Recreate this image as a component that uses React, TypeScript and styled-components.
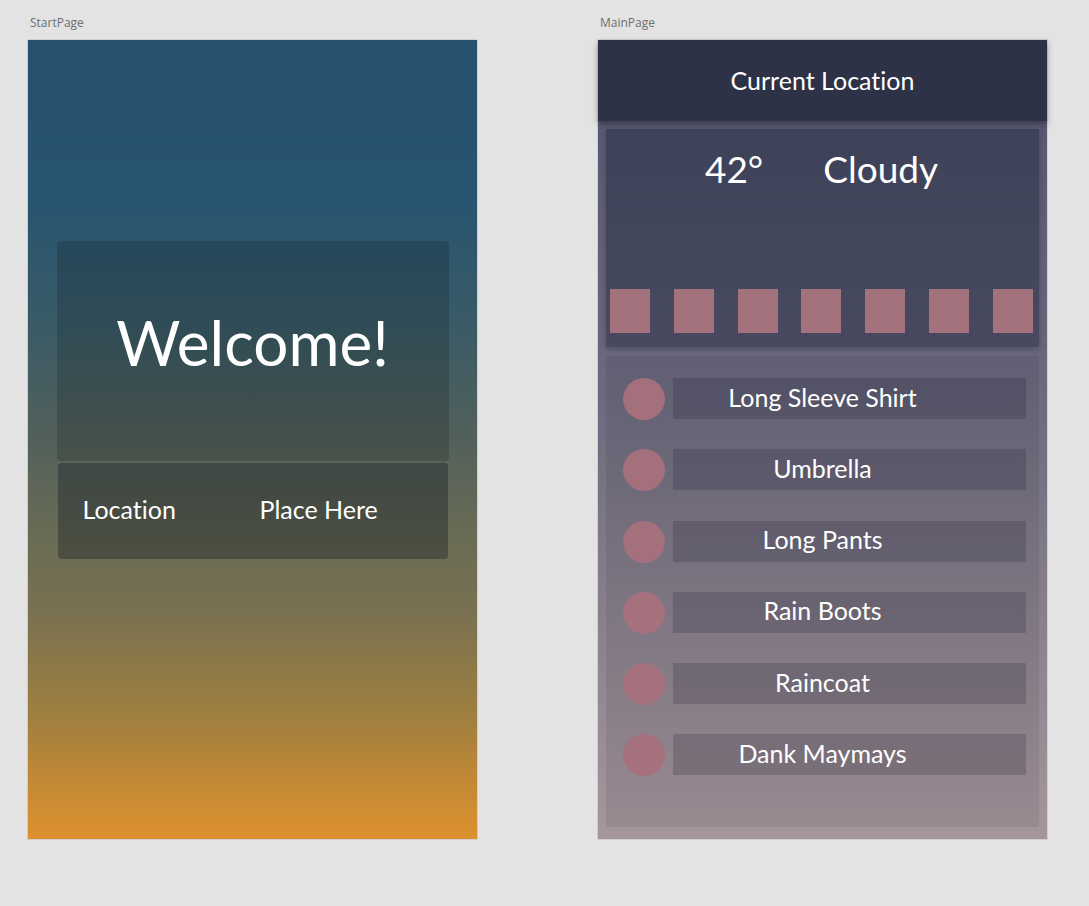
import React from "react";
import styled, { createGlobalStyle } from "styled-components";

const GlobalStyle = createGlobalStyle`
  html, body {
    margin: 0;
    padding: 0;
    background: #e3e3e3;
    font-family: Lato, "Open Sans", "Noto Sans", sans-serif;
    font-variant-ligatures: none;
  }
  * { box-sizing: border-box; }
`;

const Canvas = styled.div`
  display: flex;
  align-items: flex-start;
  gap: 119px;
  padding: 15px 0 0 27px;
  min-height: 906px;
`;

const Artboard = styled.section`
  display: flex;
  flex-direction: column;
`;

const BoardLabel = styled.div`
  font-family: "Open Sans", "Noto Sans", sans-serif;
  font-size: 12px;
  line-height: 16px;
  color: #6f6f6f;
  margin: 0 0 8px 3px;
`;

const Frame = styled.div`
  width: 451px;
  height: 801px;
  border: 1px solid #cfcfcf;
`;

const StartFrame = styled(Frame)`
  background: linear-gradient(
    180deg,
    #25506e 0%,
    #275470 20%,
    #3a5b66 36%,
    #52605b 50%,
    #656a55 60%,
    #7a7150 72%,
    #a0803f 85%,
    #c88a34 94%,
    #dc912e 100%
  );
  display: flex;
  flex-direction: column;
  align-items: center;
  padding-top: 201px;
`;

const WelcomeCard = styled.div`
  width: 392px;
  height: 220px;
  border-radius: 4px;
  background: rgba(0, 0, 0, 0.16);
  display: flex;
  align-items: center;
  justify-content: center;
  padding-bottom: 18px;
  color: #ffffff;
  font-size: 62px;
`;

const LocationCard = styled.div`
  width: 390px;
  height: 96px;
  margin-top: 2px;
  border-radius: 4px;
  background: rgba(20, 24, 34, 0.36);
  display: grid;
  grid-template-columns: 177px 1fr;
  align-items: center;
  padding: 0 0 4px 25px;
  color: #ffffff;
  font-size: 25px;
`;

const MainFrame = styled(Frame)`
  background: linear-gradient(180deg, #545470 0%, #6c6a7e 45%, #a6969c 100%);
  display: flex;
  flex-direction: column;
`;

const Header = styled.header`
  position: relative;
  z-index: 1;
  flex: none;
  height: 81px;
  background: #2d3247;
  box-shadow: 0 3px 6px rgba(0, 0, 0, 0.35);
  display: flex;
  align-items: center;
  justify-content: center;
  padding-bottom: 2px;
  color: #ffffff;
  font-size: 25px;
`;

const Body = styled.div`
  flex: 1;
  display: flex;
  flex-direction: column;
  gap: 9px;
  padding: 8px 8px 12px;
`;

const WeatherCard = styled.div`
  flex: none;
  height: 218px;
  background: linear-gradient(180deg, #3e4258 0%, #474a5f 100%);
  box-shadow: 0 2px 6px rgba(0, 0, 0, 0.25);
  display: flex;
  flex-direction: column;
  justify-content: space-between;
  padding: 18px 6px 14px 4px;
`;

const Reading = styled.div`
  display: flex;
  justify-content: center;
  gap: 60px;
  color: #ffffff;
  font-size: 37px;
  line-height: 1.2;
`;

const Forecast = styled.div`
  display: flex;
  justify-content: space-between;
`;

const DaySquare = styled.div`
  width: 40px;
  height: 44px;
  background: #a3727c;
`;

const ListPanel = styled.div`
  flex: 1;
  background: rgba(0, 0, 0, 0.07);
  display: flex;
  flex-direction: column;
  gap: 29.3px;
  padding: 22px 13px 0 17px;
`;

const ItemRow = styled.div`
  display: flex;
  align-items: flex-start;
  gap: 8px;
`;

const Dot = styled.div`
  flex: none;
  width: 42px;
  height: 42px;
  border-radius: 50%;
  background: rgba(166, 112, 124, 0.96);
`;

const ItemTag = styled.div`
  flex: 1;
  height: 41px;
  background: rgba(20, 20, 40, 0.19);
  display: flex;
  align-items: center;
  justify-content: center;
  padding: 0 54px 4px 0;
  color: #ffffff;
  font-size: 25px;
`;

const items = [
  "Long Sleeve Shirt",
  "Umbrella",
  "Long Pants",
  "Rain Boots",
  "Raincoat",
  "Dank Maymays",
];

export default function App() {
  return (
    <>
      <GlobalStyle />
      <Canvas>
        <Artboard>
          <BoardLabel>StartPage</BoardLabel>
          <StartFrame>
            <WelcomeCard>Welcome!</WelcomeCard>
            <LocationCard>
              <span>Location</span>
              <span>Place Here</span>
            </LocationCard>
          </StartFrame>
        </Artboard>
        <Artboard>
          <BoardLabel>MainPage</BoardLabel>
          <MainFrame>
            <Header>Current Location</Header>
            <Body>
              <WeatherCard>
                <Reading>
                  <span>42°</span>
                  <span>Cloudy</span>
                </Reading>
                <Forecast>
                  {Array.from({ length: 7 }, (_, i) => (
                    <DaySquare key={i} />
                  ))}
                </Forecast>
              </WeatherCard>
              <ListPanel>
                {items.map((item) => (
                  <ItemRow key={item}>
                    <Dot />
                    <ItemTag>{item}</ItemTag>
                  </ItemRow>
                ))}
              </ListPanel>
            </Body>
          </MainFrame>
        </Artboard>
      </Canvas>
    </>
  );
}
